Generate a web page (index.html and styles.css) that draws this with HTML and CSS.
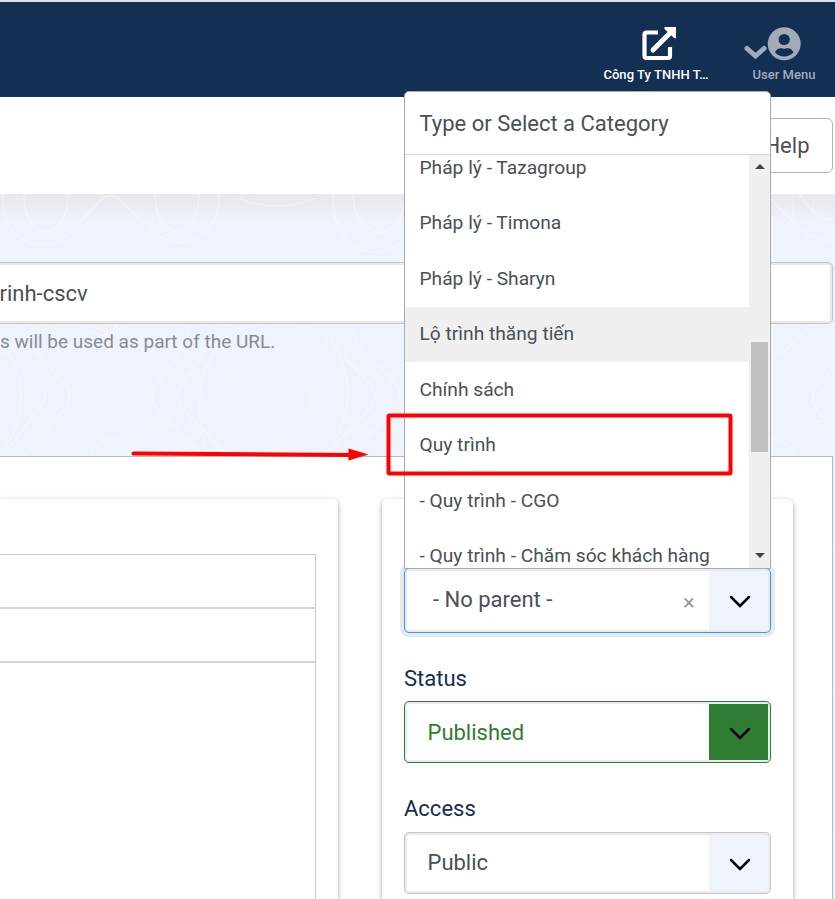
FILE: index.html
```html
<!DOCTYPE html>
<html lang="en">
<head>
<meta charset="utf-8">
<title>Edit Category</title>
<link rel="stylesheet" href="styles.css">
</head>
<body>
<header class="topbar">
  <a class="top-item site">
    <svg class="site-icon" width="36" height="36" viewBox="0 0 36 36"><path d="M16 5.500H4.500Q2.500 5.500 2.500 7.500V29Q2.500 31 4.500 31H26Q28 31 28 29V20" fill="none" stroke="#fff" stroke-width="4.200"/><path d="M11 23 28 6" stroke="#fff" stroke-width="5" stroke-linecap="round"/><path d="M22.500 0H34V11.500L31.500 10.500 22.500 2Z" fill="#fff"/></svg>
    <span>Công Ty TNHH T…</span>
  </a>
  <a class="top-item user">
    <svg class="user-icon" width="57" height="36" viewBox="0 0 57 36"><path d="M3 21.500 11.500 29 20 21.500" fill="none" stroke="#a1abba" stroke-width="5" stroke-linecap="round"/><circle cx="40.200" cy="16.800" r="16.500" fill="#a1abba"/><circle cx="40.200" cy="12.500" r="5.600" fill="#132f53"/><path d="M31 25.500C32.500 21.500 36 21 37.500 21.300Q40.200 22.200 43 21.300C45 21 48 21.500 49.400 25.500Q45.500 29.500 40.200 29.500T31 25.500Z" fill="#132f53"/></svg>
    <span>User Menu</span>
  </a>
</header>
<div class="toolbar"><button class="help">Help</button></div>
<main class="content">
  <svg class="pattern" width="835" height="705" viewBox="0 194 835 705" fill="none" stroke="#fff" stroke-width="1.300">
    <defs>
      <g id="motif">
        <path d="M3 194C1 249 52 257 73 229L101 200Q110 192 120 200L151 229C177 257 221 239 219 194M24 194C24 230 68 230 68 194M155 194C155 230 199 230 199 194"/>
        <path d="M82 324Q104 347 126 324M91 324Q108 338 118 324"/>
        <path d="M5 333Q16 350 35 366L60 390Q76 397 60 411L24 446M22 324Q26 340 40 384Q50 396 38 411L3 450M188 324 158 388Q145 396 158 412L205 456M226 324 181 384Q173 396 182 410L228 456"/>
      </g>
    </defs>
    <g opacity=".4"><path d="M3 194C1 249 52 257 73 229L101 200Q110 192 120 200L151 229C177 257 221 239 219 194M24 194C24 244 68 244 68 194M155 194C155 244 199 244 199 194M333 194C331 273 410 257 404 230M353 194C353 234 394 250 404 206M82 324Q104 347 126 324M91 324Q108 338 118 324"/>
    <path d="M0 334Q5 354 14 361L42 389Q49 396 42 404L3 456M22 324Q26 342 36 352L65 384Q74 396 65 409L24 456M190 324Q186 348 160 380Q145 396 160 413L205 456M217 333 182 385Q173 396 182 408L228 456M0 342C26 370 30 422 0 452M90 456Q110 420 132 456"/>
    <path d="M238 198Q275 214 317 198M210 456C190 420 197 345 242 327Q277 318 317 330C358 362 355 415 325 456M330 334Q336 349 345 358L371 385Q379 396 371 407L325 456M352 324Q355 345 369 356L394 382Q405 396 394 410L355 448M770 198 800 229Q820 243 835 242M799 194Q817 221 835 220M772 354Q786 355 793 342L811 324M835 367 820 382Q805 397 820 414L835 428M770 439Q785 438 796 456"/></g>
    <g opacity=".2"><circle cx="276" cy="397" r="34"/><circle cx="180" cy="397" r="41"/><circle cx="345" cy="397" r="35"/><path d="M0 354H58Q80 350 80 324M0 420H68Q88 424 88 450M133 324V346Q135 373 158 374H240M133 456V445Q135 420 160 420H240M345 324V350Q350 374 380 374H404M276 430V456M151 221V245M793 194V220Q790 245 770 247M813 200V230Q808 250 780 260M794 324V340Q797 372 835 374M794 456V440Q797 420 835 420"/></g>
    <path d="M833 550H835M833 690H835M833 835H835" opacity=".6"/>
  </svg>
  <div class="alias">rinh-cscv</div>
  <p class="hint">s will be used as part of the URL.</p>
  <section class="panel">
    <div class="card main-card"><div class="editor"><div></div><div></div></div></div>
    <div class="card side-card">
      <div class="select parent">
        <span class="value">- No parent -</span><span class="clear">×</span>
        <i class="arrow"><svg width="22" height="14" viewBox="0 0 22 14"><path d="M2 2 11 11 20 2"/></svg></i>
        <div class="dropdown">
          <div class="search">Type or Select a Category</div>
          <div class="list">
            <ul class="options">
              <li>Pháp lý - Tazagroup</li><li>Pháp lý - Timona</li><li>Pháp lý - Sharyn</li><li class="active">Lộ trình thăng tiến</li><li>Chính sách</li><li>Quy trình</li><li>- Quy trình - CGO</li><li>- Quy trình - Chăm sóc khách hàng</li>
            </ul>
            <div class="scrollbar"><i class="up"></i><b></b><i class="down"></i></div>
          </div>
        </div>
      </div>
      <label>Status</label>
      <div class="select status"><span class="value">Published</span><i class="arrow"><svg width="22" height="14" viewBox="0 0 22 14"><path d="M2 2 11 11 20 2"/></svg></i></div>
      <label>Access</label>
      <div class="select access"><span class="value">Public</span><i class="arrow"><svg width="22" height="14" viewBox="0 0 22 14"><path d="M2 2 11 11 20 2"/></svg></i></div>
    </div>
  </section>
</main>
<svg class="annotation" width="835" height="899" viewBox="0 0 835 899"><path d="M133.500 453.500 350 455" fill="none" stroke="#f00" stroke-width="4" stroke-linecap="round"/><path d="M348.500 448.500 368.500 454.500 348.500 460.500Z" fill="#f00"/><rect x="388.500" y="415.500" width="342" height="58" rx="1" fill="none" stroke="#f00" stroke-width="4"/></svg>
</body>
</html>
```

FILE: styles.css
```css
* { box-sizing: border-box; }
body { margin: 0; width: 835px; height: 899px; overflow: hidden; position: relative; background: #fff; color: #495057; font-family: Roboto, sans-serif; font-size: 22px; }
.topbar { height: 97px; border-top: 2px solid #dce3ea; background: #132f53; display: flex; justify-content: flex-end; gap: 43px; padding: 25px 19px 0 0; }
.top-item { display: flex; flex-direction: column; align-items: center; font-size: 13px; font-weight: 500; line-height: 18px; white-space: nowrap; }
.top-item svg { flex: none; }
.top-item span { margin-top: 3px; }
.site { width: 106px; color: #fff; }
.site span { letter-spacing: .06px; }
.site-icon { margin-left: 8px; }
.user { width: 64px; color: #a1abba; }
.user-icon { margin-left: -24px; }
.toolbar { height: 97px; background: #fff; display: flex; justify-content: flex-end; padding: 21px 2px 0 0; }
.help { width: 120px; height: 55px; border: 1px solid #adb5bd; border-radius: 6px; background: #fff; color: #495057; font: 22px Roboto, sans-serif; text-align: right; padding: 0 22.500px 0 0; }
.content { position: relative; height: 705px; padding-top: 68px; background: linear-gradient(#e6e9ed, #eff3fb 30px); }
.pattern { position: absolute; left: 0; top: 0; }
.alias { position: relative; width: 833px; height: 62px; border: 1px solid #c6c6c6; border-left: 0; border-radius: 0 5px 5px 0; background: #fff; box-shadow: inset -2px 0 #e8e8e8, inset 0 2px #e8e8e8, inset 0 -2px #e8e8e8; line-height: 61px; text-indent: -0.5px; }
.hint { position: relative; margin: 4px 0 0; height: 128px; font-size: 19px; line-height: 27px; color: #868b95; }
.panel { position: relative; width: 833px; height: 443px; border: 1px solid #aabbcd; border-left: 0; border-bottom: 0; background: #fefefe; display: flex; gap: 44px; padding-top: 42px; }
.card { height: 420px; background: #fefefe; box-shadow: 0 2px 5px rgba(0,0,0,.35); }
.main-card { width: 338px; border-radius: 0 5px 0 0; padding-top: 55px; }
.editor { width: 316px; height: 365px; border: 1px solid #c8c8c8; border-left: 0; }
.editor div { height: 54px; border-bottom: 2px solid #d5d5d5; }
.side-card { width: 411px; border-radius: 5px 5px 0 0; padding: 69px 22px 0; }
.select { position: relative; width: 367px; height: 62px; border: 1px solid #c4c4c4; border-radius: 5px; padding: 2px; background: #fefefe; box-shadow: inset 0 0 0 2px #ebebeb; display: flex; align-items: stretch; }
.value { flex: 1; padding-left: 20.500px; line-height: 57px; }
.access .value { line-height: 55px; }
.arrow { width: 59px; background: #eff3fb; display: flex; align-items: center; justify-content: center; }
.arrow svg { margin: 3px 0 0 2px; fill: none; stroke: #000; stroke-width: 2.500; stroke-linecap: round; }
.parent { height: 65px; border-color: #3599f5; box-shadow: 0 0 0 4px #e9e9e9, inset 0 0 0 2px #ebebeb; }
.parent .value { padding-left: 26px; line-height: 58px; }
.parent .arrow svg { margin-top: 2px; }
.clear { width: 34px; line-height: 64px; font-size: 22px; color: #999; padding-left: 8px; }
.status { border-color: #2f7d32; color: #2f7d32; }
.status .arrow { background: #2f7d32; }
label { display: block; height: 68px; line-height: 91px; color: #132f53; }
.status + label { height: 69px; }
.dropdown { position: absolute; z-index: 2; left: -1px; bottom: 63px; width: 367px; height: 478px; border: 1px solid #aaa; border-radius: 5px 5px 0 0; background: #fff; }
.search { height: 63px; border-bottom: 1px solid #d8d8d8; padding-left: 14.500px; line-height: 63px; }
.list { height: 413px; overflow: hidden; display: flex; }
.options { list-style: none; margin: -15.300px 0 0; padding: 0; flex: 1; font-size: 19.200px; }
.options li { height: 55.500px; line-height: 56px; padding-left: 14.500px; white-space: nowrap; }
.options .active { background: #f0f0f0; box-shadow: inset 0 1px #fff; }
.scrollbar { width: 21px; background: #f0f0f0; display: flex; flex-direction: column; align-items: center; padding: 9px 0 10px; }
.scrollbar i { border: 5px solid transparent; }
.scrollbar .up { border-top: 0; border-bottom-color: #444; }
.scrollbar .down { border-bottom: 0; border-top-color: #444; margin-top: auto; }
.scrollbar b { width: 17px; height: 110px; background: #c1c1c1; margin-top: 173px; }
.annotation { position: absolute; z-index: 5; left: 0; top: 0; }
```
